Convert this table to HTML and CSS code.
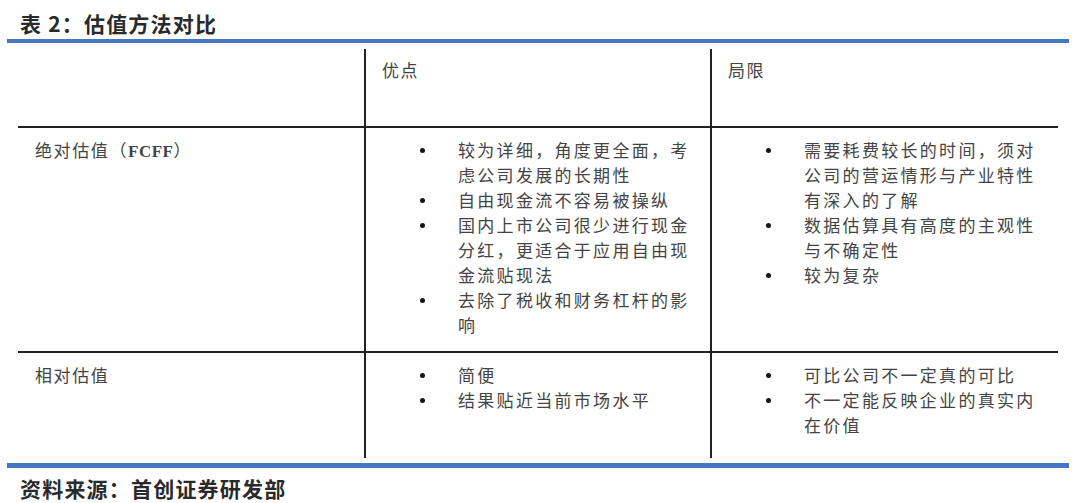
FILE: index.html
```html
<!DOCTYPE html>
<html lang="zh-CN">
<head>
<meta charset="utf-8">
<title>估值方法对比</title>
<link rel="stylesheet" href="styles.css">
</head>
<body>
<div class="page">
  <h1 class="title">表 2：估值方法对比</h1>
  <div class="rule"></div>
  <div class="grid">
    <div class="cell head c1"></div>
    <div class="cell head c2">优点</div>
    <div class="cell head c3">局限</div>

    <div class="cell row c1">绝对估值（<span class="latin">FCFF</span>）</div>
    <div class="cell row c2">
      <ul class="list">
        <li><span class="dot"></span><span class="txt">较为详细，角度更全面，考虑公司发展的长期性</span></li>
        <li><span class="dot"></span><span class="txt">自由现金流不容易被操纵</span></li>
        <li><span class="dot"></span><span class="txt">国内上市公司很少进行现金分红，更适合于应用自由现金流贴现法</span></li>
        <li><span class="dot"></span><span class="txt">去除了税收和财务杠杆的影响</span></li>
      </ul>
    </div>
    <div class="cell row c3">
      <ul class="list">
        <li><span class="dot"></span><span class="txt">需要耗费较长的时间，须对公司的营运情形与产业特性有深入的了解</span></li>
        <li><span class="dot"></span><span class="txt">数据估算具有高度的主观性与不确定性</span></li>
        <li><span class="dot"></span><span class="txt">较为复杂</span></li>
      </ul>
    </div>

    <div class="cell row c1">相对估值</div>
    <div class="cell row c2">
      <ul class="list">
        <li><span class="dot"></span><span class="txt">简便</span></li>
        <li><span class="dot"></span><span class="txt">结果贴近当前市场水平</span></li>
      </ul>
    </div>
    <div class="cell row c3">
      <ul class="list">
        <li><span class="dot"></span><span class="txt">可比公司不一定真的可比</span></li>
        <li><span class="dot"></span><span class="txt">不一定能反映企业的真实内在价值</span></li>
      </ul>
    </div>
  </div>
  <div class="rule bottom"></div>
  <p class="source">资料来源：首创证券研发部</p>
</div>
</body>
</html>
```

FILE: styles.css
```css
* { box-sizing: border-box; }

html, body {
  margin: 0;
  padding: 0;
  background: #ffffff;
}

body {
  font-family: "Noto Sans CJK SC", "Noto Sans", sans-serif;
  color: #444444;
  width: 1080px;
  height: 503px;
  overflow: hidden;
}

.page {
  padding-left: 7px;
  width: 1069px;
}

.title {
  margin: 0;
  padding: 10px 0 0 13px;
  font-size: 21px;
  line-height: 26px;
  height: 39px;
  font-weight: 700;
  letter-spacing: 1.2px;
  color: #2a2a2a;
}

.rule {
  height: 4px;
  width: 1062px;
  background: #4677c2;
}

.rule.bottom {
  margin-top: 5px;
  height: 5px;
}

.grid {
  margin: 6px 0 0 11px;
  width: 1040px;
  display: grid;
  grid-template-columns: 346px 346px 348px;
  grid-template-rows: 77px 225px 107px;
}

.cell {
  font-size: 17px;
  line-height: 25px;
  letter-spacing: 1.6px;
  padding: 8px 10px 0 16px;
}

.cell.c1 { padding-left: 17px; }

.cell.c2, .cell.c3 {
  border-left: 2px solid #222222;
}

.cell.row {
  border-top: 2px solid #222222;
  padding-top: 9px;
}

.latin {
  font-family: "Liberation Serif", serif;
  font-weight: 700;
  letter-spacing: 0.5px;
}

.list {
  list-style: none;
  margin: 0 0 0 -16px;
  padding: 0 0 0 53px;
}

.list li {
  display: flex;
  align-items: flex-start;
}

.dot {
  flex: 0 0 39px;
  height: 25px;
  display: flex;
  align-items: center;
  padding-left: 1px;
}

.dot::before {
  content: "";
  width: 5px;
  height: 5px;
  border-radius: 50%;
  background: #151515;
  margin-top: 1px;
}

.txt {
  width: 240px;
  letter-spacing: 2.3px;
}

.source {
  margin: 9px 0 0 13px;
  font-size: 21px;
  line-height: 22px;
  font-weight: 700;
  letter-spacing: 1.2px;
  color: #2a2a2a;
}
```
